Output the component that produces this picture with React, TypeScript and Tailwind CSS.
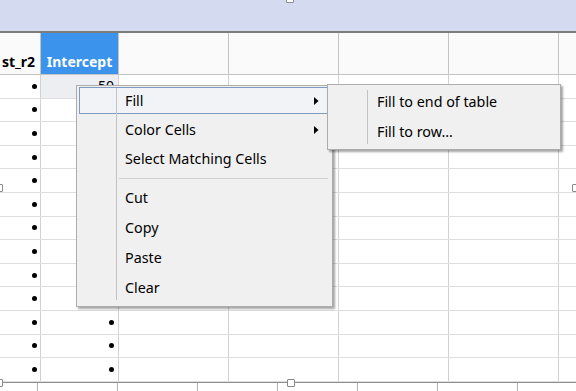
import React from "react";

const cols = [
  { w: "w-[41px]" },
  { w: "w-[78px]" },
  { w: "w-[110px]" },
  { w: "w-[110px]" },
  { w: "w-[110px]" },
  { w: "w-[110px]" },
  { w: "w-[40px]" },
];

const rowCount = 13;

function Dot() {
  return <span className="inline-block w-[5px] h-[5px] rounded-full bg-black" />;
}

function Arrow() {
  return (
    <svg width="5" height="8" viewBox="0 0 5 8" className="shrink-0">
      <path d="M0 0 L4.5 4 L0 8 Z" fill="#000" />
    </svg>
  );
}

function MenuItem({ label, sub, active }: { label: string; sub?: boolean; active?: boolean }) {
  return (
    <div
      className={`flex items-center h-[27px] my-[1px] pl-[45px] pr-[8px] border ${
        active ? "border-[#7e9cc0] bg-[#f1f3f6]" : "border-transparent"
      }`}
    >
      <span className="flex-1">{label}</span>
      {sub && <Arrow />}
    </div>
  );
}

function LowerItem({ label }: { label: string }) {
  return (
    <div className="flex items-center h-[28px] my-[1px] pl-[45px] pr-[8px] border border-transparent">
      <span>{label}</span>
    </div>
  );
}

function Handle({ pos }: { pos: string }) {
  return <div className={`absolute w-[8px] h-[8px] bg-white border border-[#8a8a8a] rounded-[1px] ${pos}`} />;
}

export default function App() {
  return (
    <div
      className="relative w-[576px] h-[391px] overflow-hidden bg-white text-black"
      style={{ fontFamily: '"Noto Sans", "Open Sans", sans-serif' }}
    >
      {/* title strip */}
      <div className="h-[31px] bg-[#d4daf0] border-b-2 border-[#7c7c7c] box-content" />

      {/* header */}
      <div className="flex h-[42px] bg-[#fafafa] border-b border-[#c4c4c4]">
        {cols.map((c, i) => (
          <div
            key={i}
            className={`${c.w} shrink-0 h-full border-r border-[#c4c4c4] flex items-end pb-[2px] ${
              i === 1 ? "bg-[#3b93ec] text-white justify-center" : "justify-end pr-[5px]"
            }`}
          >
            {i === 0 && <span className="text-[14px] font-bold leading-[20px] whitespace-nowrap">st_r2</span>}
            {i === 1 && <span className="text-[14px] font-bold leading-[20px]">Intercept</span>}
          </div>
        ))}
      </div>

      {/* body rows */}
      <div className="flex flex-col">
        {Array.from({ length: rowCount }).map((_, r) => (
          <div key={r} className="flex h-[23.6px] border-b border-[#dedede]">
            {cols.map((c, i) => (
              <div
                key={i}
                className={`${c.w} shrink-0 h-full border-r border-[#d2d2d2] flex items-center justify-end ${
                  i === 1 ? "pr-[4px]" : "pr-[3px]"
                } ${i === 1 && r === 0 ? "bg-[#eceef2]" : ""}`}
              >
                {i === 0 && <Dot />}
                {i === 1 && r === 0 && <span className="text-[14px] leading-none">50</span>}
                {i === 1 && r > 0 && <Dot />}
              </div>
            ))}
          </div>
        ))}
      </div>

      {/* axis */}
      <div className="h-[1px] bg-[#8e8e8e]" />
      <div className="flex h-[9px] pl-[37px]">
        {Array.from({ length: 7 }).map((_, i) => (
          <div key={i} className="w-[80px] shrink-0 border-l border-[#b4b4b4]" />
        ))}
      </div>

      {/* selection handles */}
      <Handle pos="left-[286px] top-[-5px]" />
      <Handle pos="left-[-5px] top-[184px]" />
      <Handle pos="left-[572px] top-[184px]" />
      <Handle pos="left-[-5px] top-[379px]" />
      <Handle pos="left-[287px] top-[379px]" />

      {/* context menu */}
      <div className="absolute left-[76px] top-[85px] w-[257px] h-[222px] flex flex-col bg-[#f0f0f0] border border-[#acacac] shadow-[2px_2px_2px_rgba(0,0,0,0.35)] pl-[2px] pr-[4px] text-[14.3px]">
        <div className="absolute left-[39px] top-[2px] bottom-[6px] w-px bg-[#c2c2c2]" />
        <MenuItem label="Fill" sub active />
        <MenuItem label="Color Cells" sub />
        <MenuItem label="Select Matching Cells" />
        <div className="h-[10px] shrink-0 pl-[40px] pt-[5px]">
          <div className="h-px bg-[#cfcfcf]" />
        </div>
        <LowerItem label="Cut" />
        <LowerItem label="Copy" />
        <LowerItem label="Paste" />
        <LowerItem label="Clear" />
      </div>

      {/* submenu */}
      <div className="absolute left-[327px] top-[84px] w-[234px] h-[66px] bg-[#f0f0f0] border border-[#acacac] shadow-[2px_2px_2px_rgba(0,0,0,0.35)] pt-[2px] text-[14.3px]">
        <div className="absolute left-[39px] top-[5px] bottom-[5px] w-px bg-[#c2c2c2]" />
        <div className="flex items-center h-[30px] pl-[49px]">Fill to end of table</div>
        <div className="flex items-center h-[30px] pl-[49px]">Fill to row...</div>
      </div>
    </div>
  );
}
